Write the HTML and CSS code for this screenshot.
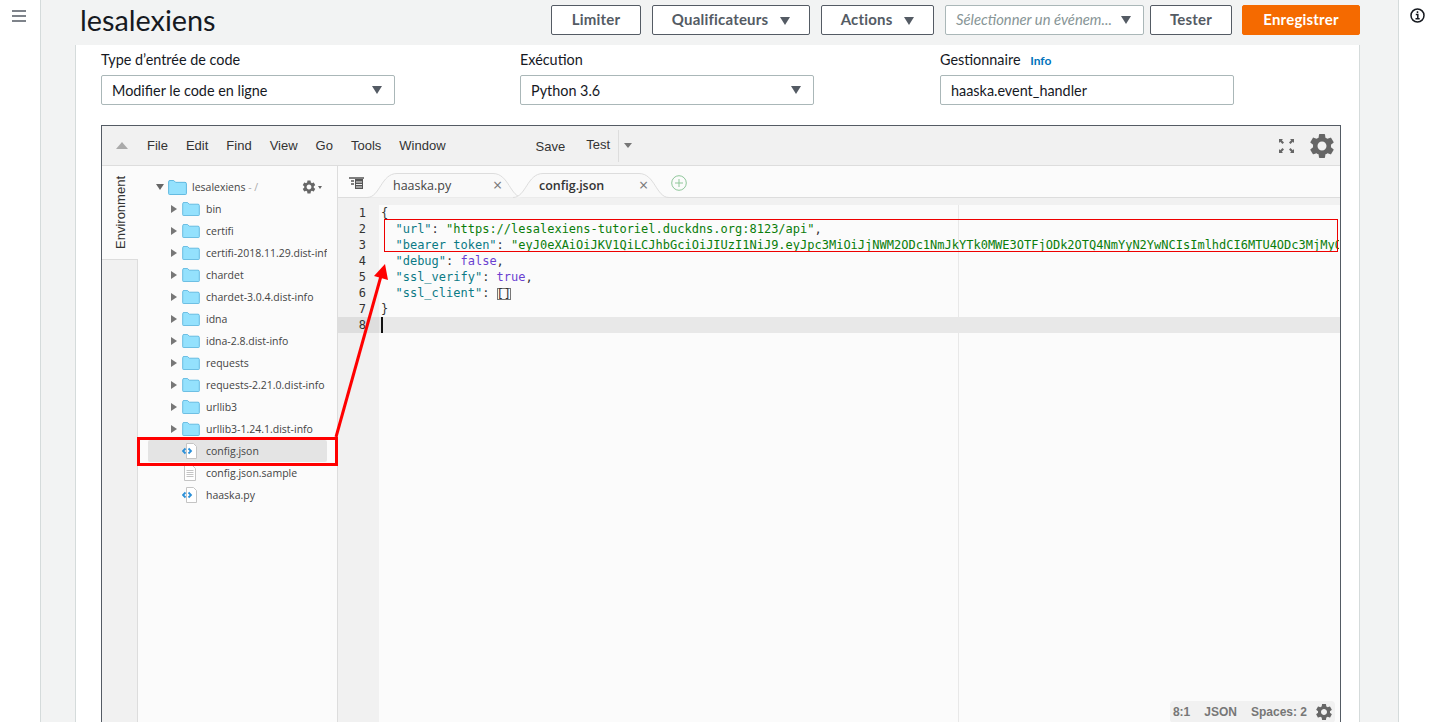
FILE: index.html
```html
<!DOCTYPE html>
<html lang="fr">
<head>
  <meta charset="UTF-8" />
  <title>lesalexiens</title>
  <link rel="stylesheet" href="styles.css">
</head>
<body>
  <svg class="defs" width="0" height="0">
    <symbol id="gear" viewBox="0 0 24 24"><path d="M19.14 12.94c.04-.3.06-.61.06-.94 0-.32-.02-.64-.07-.94l2.03-1.58a.49.49 0 0 0 .12-.61l-1.92-3.32a.488.488 0 0 0-.59-.22l-2.39.96c-.5-.38-1.03-.7-1.62-.94l-.36-2.54a.484.484 0 0 0-.48-.41h-3.84c-.24 0-.43.17-.47.41l-.36 2.54c-.59.24-1.13.57-1.62.94l-2.39-.96c-.22-.08-.47 0-.59.22L2.74 8.87c-.12.21-.08.47.12.61l2.03 1.58c-.05.3-.09.63-.09.94s.02.64.07.94l-2.03 1.58a.49.49 0 0 0-.12.61l1.92 3.32c.12.22.37.29.59.22l2.39-.96c.5.38 1.03.7 1.62.94l.36 2.54c.05.24.24.41.48.41h3.84c.24 0 .44-.17.47-.41l.36-2.54c.59-.24 1.13-.56 1.62-.94l2.39.96c.22.08.47 0 .59-.22l1.92-3.32c.12-.22.07-.47-.12-.61l-2.01-1.58zM12 15.6c-1.98 0-3.6-1.62-3.6-3.6s1.62-3.6 3.6-3.6 3.6 1.62 3.6 3.6-1.62 3.6-3.6 3.6z"/></symbol>
    <symbol id="folder" viewBox="0 0 20 16"><path d="M1.5 15.5a1 1 0 0 1-1-1V2A1.5 1.5 0 0 1 2 .5h4l2 2h10A1.5 1.5 0 0 1 19.500 4v10.500a1 1 0 0 1-1 1z" fill="#94e1fd" stroke="#5ab5de"/></symbol>
    <symbol id="code-file" viewBox="0 0 16 16"><path d="M4.500.5h7l3 3v12h-10z" fill="#fff" stroke="#c4c4c4"/><path d="M3.500 5.500 1 8l2.500 2.500M6.500 5.500 9 8l-2.500 2.500" fill="none" stroke="#2a8fd8" stroke-width="1.800"/></symbol>
    <symbol id="text-file" viewBox="0 0 16 16"><path d="M2.500.5h8l3 3v12h-11z" fill="#fff" stroke="#c4c4c4"/><path d="M4.500 5.500h7M4.500 7.500h7M4.500 9.500h7M4.500 11.500h7" stroke="#c4c4c4"/></symbol>
    <symbol id="tab-shape" viewBox="0 0 156 25" preserveAspectRatio="none"><path d="M0 24.500C13 24.500 14 .5 30 .5H126C142 .5 143 24.500 156 24.500" /></symbol>
  </svg>

  <nav class="side-nav">
    <svg class="burger" width="14" height="12" viewBox="0 0 14 12"><path d="M0 1h14M0 6h14M0 11h14" stroke="#545b64" stroke-width="1.600"/></svg>
  </nav>

  <main class="main">
    <header class="page-head">
      <h1 class="title">lesalexiens</h1>
      <div class="actions">
        <button class="btn btn-limit">Limiter</button>
        <button class="btn btn-qual">Qualificateurs <i class="caret"></i></button>
        <button class="btn btn-act">Actions <i class="caret"></i></button>
        <div class="event-select"><em>Sélectionner un événem...</em><i class="caret"></i></div>
        <button class="btn btn-test">Tester</button>
        <button class="btn btn-save">Enregistrer</button>
      </div>
    </header>

    <section class="panel">
      <div class="fields">
        <div class="field">
          <label>Type d’entrée de code</label>
          <div class="select">Modifier le code en ligne <i class="caret"></i></div>
        </div>
        <div class="field">
          <label>Exécution</label>
          <div class="select">Python 3.6 <i class="caret"></i></div>
        </div>
        <div class="field">
          <label>Gestionnaire <a class="info">Info</a></label>
          <div class="select">haaska.event_handler</div>
        </div>
      </div>

      <div class="ide">
        <div class="ide-bar">
          <i class="collapse"></i>
          <ul class="menu">
            <li>File</li><li>Edit</li><li>Find</li><li>View</li><li>Go</li><li>Tools</li><li>Window</li>
          </ul>
          <span class="save">Save</span>
          <span class="test">Test</span>
          <i class="test-caret"></i>
          <svg class="fullscreen" width="17" height="16" viewBox="0 0 17 16"><path d="M1 1h4L3.800 2.200 6 4.500 4.500 6 2.200 3.800 1 5zM16 1h-4l1.200 1.200L11 4.500 12.500 6l2.300-2.200L16 5zM1 15h4l-1.200-1.200L6 11.500 4.500 10l-2.300 2.200L1 11zM16 15h-4l1.200-1.200L11 11.500l1.500-1.500 2.300 2.200L16 11z" fill="#666"/></svg>
          <svg class="big-gear" width="30" height="30"><use href="#gear"/></svg>
        </div>

        <div class="ide-body">
          <div class="side-tabs">
            <div class="side-tab"><span>Environment</span></div>
          </div>

          <div class="tree">
            <div class="root-row">
              <i class="arrow-down"></i>
              <svg class="folder" width="19" height="15"><use href="#folder"/></svg>
              <span class="root-name">lesalexiens</span><span class="root-path"> - /</span>
              <svg class="tree-gear" width="16" height="16"><use href="#gear"/></svg><i class="tiny-caret"></i>
            </div>
            <div class="row"><i class="arrow"></i><svg class="folder" width="18" height="14"><use href="#folder"/></svg><span>bin</span></div>
            <div class="row"><i class="arrow"></i><svg class="folder" width="18" height="14"><use href="#folder"/></svg><span>certifi</span></div>
            <div class="row"><i class="arrow"></i><svg class="folder" width="18" height="14"><use href="#folder"/></svg><span>certifi-2018.11.29.dist-info</span></div>
            <div class="row"><i class="arrow"></i><svg class="folder" width="18" height="14"><use href="#folder"/></svg><span>chardet</span></div>
            <div class="row"><i class="arrow"></i><svg class="folder" width="18" height="14"><use href="#folder"/></svg><span>chardet-3.0.4.dist-info</span></div>
            <div class="row"><i class="arrow"></i><svg class="folder" width="18" height="14"><use href="#folder"/></svg><span>idna</span></div>
            <div class="row"><i class="arrow"></i><svg class="folder" width="18" height="14"><use href="#folder"/></svg><span>idna-2.8.dist-info</span></div>
            <div class="row"><i class="arrow"></i><svg class="folder" width="18" height="14"><use href="#folder"/></svg><span>requests</span></div>
            <div class="row"><i class="arrow"></i><svg class="folder" width="18" height="14"><use href="#folder"/></svg><span>requests-2.21.0.dist-info</span></div>
            <div class="row"><i class="arrow"></i><svg class="folder" width="18" height="14"><use href="#folder"/></svg><span>urllib3</span></div>
            <div class="row"><i class="arrow"></i><svg class="folder" width="18" height="14"><use href="#folder"/></svg><span>urllib3-1.24.1.dist-info</span></div>
            <div class="row file selected"><svg class="file-icon" width="16" height="16"><use href="#code-file"/></svg><span>config.json</span></div>
            <div class="row file"><svg class="file-icon" width="16" height="16"><use href="#text-file"/></svg><span>config.json.sample</span></div>
            <div class="row file"><svg class="file-icon" width="16" height="16"><use href="#code-file"/></svg><span>haaska.py</span></div>
          </div>

          <div class="editor">
            <div class="tab-bar">
              <svg class="tabs-icon" width="15" height="13" viewBox="0 0 15 13"><path d="M0 1h15M2 4h3M2 7h3" stroke="#555" stroke-width="1.500"/><rect x="6" y="2" width="8" height="10" fill="#555"/><path d="M7 5h6M7 7.500h6M7 10h6" stroke="#eee"/></svg>
              <div class="tab"><svg class="tab-bg" width="156" height="25"><use href="#tab-shape"/></svg><span>haaska.py</span><b>×</b></div>
              <div class="tab active"><svg class="tab-bg" width="156" height="25"><use href="#tab-shape"/></svg><span>config.json</span><b>×</b></div>
              <svg class="add-tab" width="16" height="16" viewBox="0 0 16 16"><circle cx="8" cy="8" r="7.300" fill="none" stroke="#8fc79a"/><path d="M8 4v8M4 8h8" stroke="#8fc79a"/></svg>
            </div>
            <div class="code-wrap">
              <div class="gutter">
                <div>1</div><div>2</div><div>3</div><div>4</div><div>5</div><div>6</div><div>7</div><div class="cur">8</div>
              </div>
              <div class="code">
                <div class="print-margin"></div>
<div class="ln">{</div>
<div class="ln">  <span class="k">"url"</span>: <span class="s">"https://lesalexiens-tutoriel.duckdns.org:8123/api"</span>,</div>
<div class="ln">  <span class="k">"bearer_token"</span>: <span class="s">"eyJ0eXAiOiJKV1QiLCJhbGciOiJIUzI1NiJ9.eyJpc3MiOiJjNWM2ODc1NmJkYTk0MWE3OTFjODk2OTQ4NmYyN2YwNCIsImlhdCI6MTU4ODc3MjMyO</span></div>
<div class="ln">  <span class="k">"debug"</span>: <span class="b">false</span>,</div>
<div class="ln">  <span class="k">"ssl_verify"</span>: <span class="b">true</span>,</div>
<div class="ln">  <span class="k">"ssl_client"</span>: <span class="match">[]</span></div>
<div class="ln">}</div>
<div class="ln cur"><i class="cursor"></i></div>
                <div class="status">
                  <span>8:1</span><span>JSON</span><span>Spaces: 2</span>
                  <svg width="20" height="20"><use href="#gear"/></svg>
                </div>
              </div>
            </div>
          </div>
        </div>
      </div>
    </section>
  </main>

  <aside class="help">
    <svg width="15" height="15" viewBox="0 0 15 15"><circle cx="7.500" cy="7.500" r="6.500" fill="none" stroke="#16191f" stroke-width="1.500"/><path d="M7.500 3.200v1.800M5.800 6.500h2v3.500M5.500 10.800h4.200" fill="none" stroke="#16191f" stroke-width="1.500"/></svg>
  </aside>

  <!-- annotations drawn on top of the screenshot -->
  <svg class="notes" width="1440" height="722">
    <rect x="138.500" y="438.500" width="198" height="26" fill="none" stroke="#f00" stroke-width="3"/>
    <rect x="384.500" y="219.500" width="953" height="32" fill="none" stroke="#e00" stroke-width="1"/>
    <path d="M336 437 381 276" stroke="#f00" stroke-width="3" fill="none"/>
    <path d="M385 264 374 276 388 280z" fill="#f00"/>
  </svg>
</body>
</html>
```

FILE: styles.css
```css
html, body {
  margin: 0;
  padding: 0;
  height: 722px;
  overflow: hidden;
}

body {
  display: flex;
  background: #fff;
  color: #16191f;
  font-family: "Lato", "Open Sans", sans-serif;
  font-size: 14.400px;
}

.defs {
  position: absolute;
}

.notes {
  position: absolute;
  left: 0;
  top: 0;
  pointer-events: none;
}

.side-nav {
  width: 40px;
  flex: none;
  border-right: 1px solid #d5dbdb;
  box-sizing: content-box;
}

.burger {
  display: block;
  margin: 10px 0 0 12px;
}

.help {
  flex: none;
  border-left: 1px solid #d5dbdb;
  padding: 8px 0 0 11px;
  box-sizing: border-box;
  width: 42px;
}

.main {
  flex: 1;
  min-width: 0;
  background: #f2f3f3;
  padding: 0 38px 0 34px;
}

.page-head {
  height: 45px;
  display: flex;
  align-items: flex-start;
  justify-content: space-between;
  padding-left: 5px;
}

.title {
  margin: 0;
  font-size: 28.800px;
  font-weight: 400;
  line-height: 40px;
}

.actions {
  display: flex;
  gap: 11px;
  margin-top: 5px;
}

.btn {
  height: 30px;
  padding: 0 0 2px;
  background: #fff;
  border: 1px solid #545b64;
  border-radius: 2px;
  color: #545b64;
  font: 700 15px "Lato", sans-serif;
  letter-spacing: .2px;
}

.btn-limit { width: 90px; }
.btn-qual { width: 158px; }
.btn-act { width: 113px; }
.btn-test { width: 82px; margin-left: -5px; }

.btn-save {
  width: 118px;
  margin-left: -1px;
  background: #f56a00;
  border-color: #f56a00;
  color: #fff;
}

.caret {
  display: inline-block;
  width: 0;
  height: 0;
  margin-left: 8px;
  border-left: 5.500px solid transparent;
  border-right: 5.500px solid transparent;
  border-top: 8px solid #545b64;
}

.event-select {
  width: 199px;
  height: 30px;
  box-sizing: border-box;
  display: flex;
  align-items: center;
  justify-content: space-between;
  padding: 0 12px 2px 10px;
  background: #fff;
  border: 1px solid #aab7b8;
  border-radius: 2px;
  color: #879596;
  font-size: 14.800px;
  white-space: nowrap;
}

.event-select .caret {
  margin-left: 4px;
  margin-top: 2px;
}

.panel {
  background: #fff;
  border-left: 1px solid #d5dbdb;
  border-right: 1px solid #d5dbdb;
  padding: 6px 18px 0 25px;
  height: 680px;
}

.fields {
  display: grid;
  grid-template-columns: 419px 420px 1fr;
}

.field label {
  display: block;
  height: 18px;
  line-height: 18px;
  margin-bottom: 6px;
}

.info {
  margin-left: 6px;
  color: #0073bb;
  font-size: 12px;
  font-weight: 700;
}

.select {
  width: 294px;
  height: 30px;
  box-sizing: border-box;
  display: flex;
  align-items: center;
  justify-content: space-between;
  padding: 0 12px 0 10px;
  border: 1px solid #aab7b8;
  border-radius: 2px;
}

.ide {
  margin-top: 20px;
  height: 610px;
  border: 1px solid #545b64;
  display: flex;
  flex-direction: column;
  font-family: "Liberation Sans", sans-serif;
}

.ide-bar {
  height: 39px;
  flex: none;
  display: flex;
  align-items: center;
  background: #f1f1f1;
  border-bottom: 1px solid #ddd;
  color: #333;
  font-size: 13px;
}

.collapse {
  width: 0;
  height: 0;
  margin-left: 14px;
  border-left: 6px solid transparent;
  border-right: 6px solid transparent;
  border-bottom: 7px solid #aaa;
}

.menu {
  display: flex;
  gap: 18px;
  list-style: none;
  margin: 0 0 0 19px;
  padding: 0;
}

.save {
  margin-left: 90px;
  padding-top: 2px;
}

.test {
  margin-left: 21px;
}

.test-caret {
  width: 0;
  height: 0;
  margin-left: 5px;
  border-left: 4px solid transparent;
  border-right: 4px solid transparent;
  border-top: 5px solid #777;
}

.test::after {
  content: "";
  display: inline-block;
  height: 32px;
  margin: 0 0 0 8px;
  vertical-align: middle;
  border-right: 1px solid #ddd;
}

.fullscreen {
  margin-left: auto;
}

.big-gear {
  margin: 0 3px 0 12px;
  fill: #666;
}

.ide-body {
  flex: 1;
  min-height: 0;
  display: flex;
}

.side-tabs {
  width: 35px;
  flex: none;
  background: #f1f1f1;
  border-right: 1px solid #ddd;
}

.side-tab {
  height: 93px;
  margin-right: -1px;
  background: #fbfbfb;
  border-bottom: 1px solid #ddd;
  display: flex;
  align-items: center;
  justify-content: center;
  font-size: 13px;
  color: #333;
}

.side-tab span {
  writing-mode: vertical-rl;
  transform: rotate(180deg);
}

.tree {
  width: 200px;
  flex: none;
  box-sizing: border-box;
  background: #fbfbfb;
  border-right: 1px solid #ddd;
  padding: 10px 10px 0 10px;
  font-family: "Open Sans", sans-serif;
  font-size: 10.500px;
  color: #444;
}

.root-row,
.row {
  height: 22px;
  display: flex;
  align-items: center;
  white-space: nowrap;
  overflow: hidden;
}

.root-row {
  padding-left: 8px;
}

.row {
  padding-left: 23px;
}

.arrow-down {
  flex: none;
  width: 0;
  height: 0;
  border-left: 4px solid transparent;
  border-right: 4px solid transparent;
  border-top: 6px solid #666;
  margin-right: 4px;
}

.arrow {
  flex: none;
  width: 0;
  height: 0;
  border-top: 4px solid transparent;
  border-bottom: 4px solid transparent;
  border-left: 6px solid #777;
  margin-right: 5px;
}

.folder {
  flex: none;
  margin-right: 6px;
}

.root-row .folder {
  margin-right: 5px;
}

.root-path {
  color: #aaa;
  white-space: pre;
}

.tree-gear {
  margin-left: auto;
  fill: #666;
}

.tiny-caret {
  margin: 0 5px 0 1px;
  border-left: 2.500px solid transparent;
  border-right: 2.500px solid transparent;
  border-top: 3px solid #666;
}

.file {
  padding-left: 34px;
}

.file-icon {
  flex: none;
  margin-right: 8px;
}

.selected {
  background: #e4e4e4;
  border-radius: 2px;
}

.editor {
  flex: 1;
  min-width: 0;
  display: flex;
  flex-direction: column;
}

.tab-bar {
  height: 31px;
  flex: none;
  display: flex;
  align-items: flex-end;
  background: #fbfbfb;
  border-bottom: 1px solid #ddd;
}

.tabs-icon {
  margin: 0 3px 7px 11px;
  flex: none;
}

.tab {
  position: relative;
  width: 156px;
  height: 25px;
  flex: none;
  margin-bottom: -1px;
  margin-right: -10px;
  font-family: "Open Sans", sans-serif;
  font-size: 12.500px;
  color: #444;
}

.tab-bg {
  position: absolute;
  left: 0;
  top: 0;
  fill: #f9f9f9;
  stroke: #ddd;
}

.tab span {
  position: absolute;
  left: 26px;
  top: 4px;
}

.tab b {
  position: absolute;
  left: 126px;
  top: 1px;
  font-weight: 400;
  font-size: 16px;
  color: #777;
}

.active {
  color: #333;
}

.active span {
  font-weight: 600;
}

.add-tab {
  margin: 0 0 6px 12px;
  flex: none;
}

.code-wrap {
  flex: 1;
  min-height: 0;
  display: flex;
  padding-top: 7px;
  background: #f1f1f1;
}

.gutter {
  width: 41px;
  flex: none;
  box-sizing: border-box;
  padding-right: 13px;
  text-align: right;
  font: 12px/16px "DejaVu Sans Mono", monospace;
  color: #333;
}

.gutter .cur {
  background: #dedede;
  margin-right: -13px;
  padding-right: 13px;
}

.code {
  position: relative;
  flex: 1;
  min-width: 0;
  background: #fbfbfb;
  font: 12px/16px "DejaVu Sans Mono", monospace;
  color: #333;
  overflow: hidden;
}

.print-margin {
  position: absolute;
  left: 579px;
  top: 0;
  bottom: 0;
  border-left: 1px solid #e8e8e8;
}

.ln {
  position: relative;
  height: 16px;
  padding-left: 2px;
  white-space: pre;
  overflow: hidden;
  width: 958px;
}

.ln.cur {
  width: auto;
  background: #e8e8e8;
}

.cursor {
  display: block;
  width: 2px;
  height: 16px;
  background: #111;
}

.k { color: #0b7a85; }
.s { color: #0a7d0a; }
.b { color: #6a3fd0; }

.match {
  display: inline-block;
  line-height: 12px;
  vertical-align: -1px;
  box-shadow: inset 0 0 0 1px #777;
}

.status {
  position: absolute;
  right: 5px;
  bottom: 13px;
  display: flex;
  align-items: center;
  gap: 14px;
  height: 22px;
  padding: 0 1px 0 3px;
  background: #f1f1f1;
  border-radius: 4px;
  font: 700 12px "Liberation Sans", sans-serif;
  color: #777;
}

.status svg {
  fill: #666;
  margin-left: -7px;
}
```
